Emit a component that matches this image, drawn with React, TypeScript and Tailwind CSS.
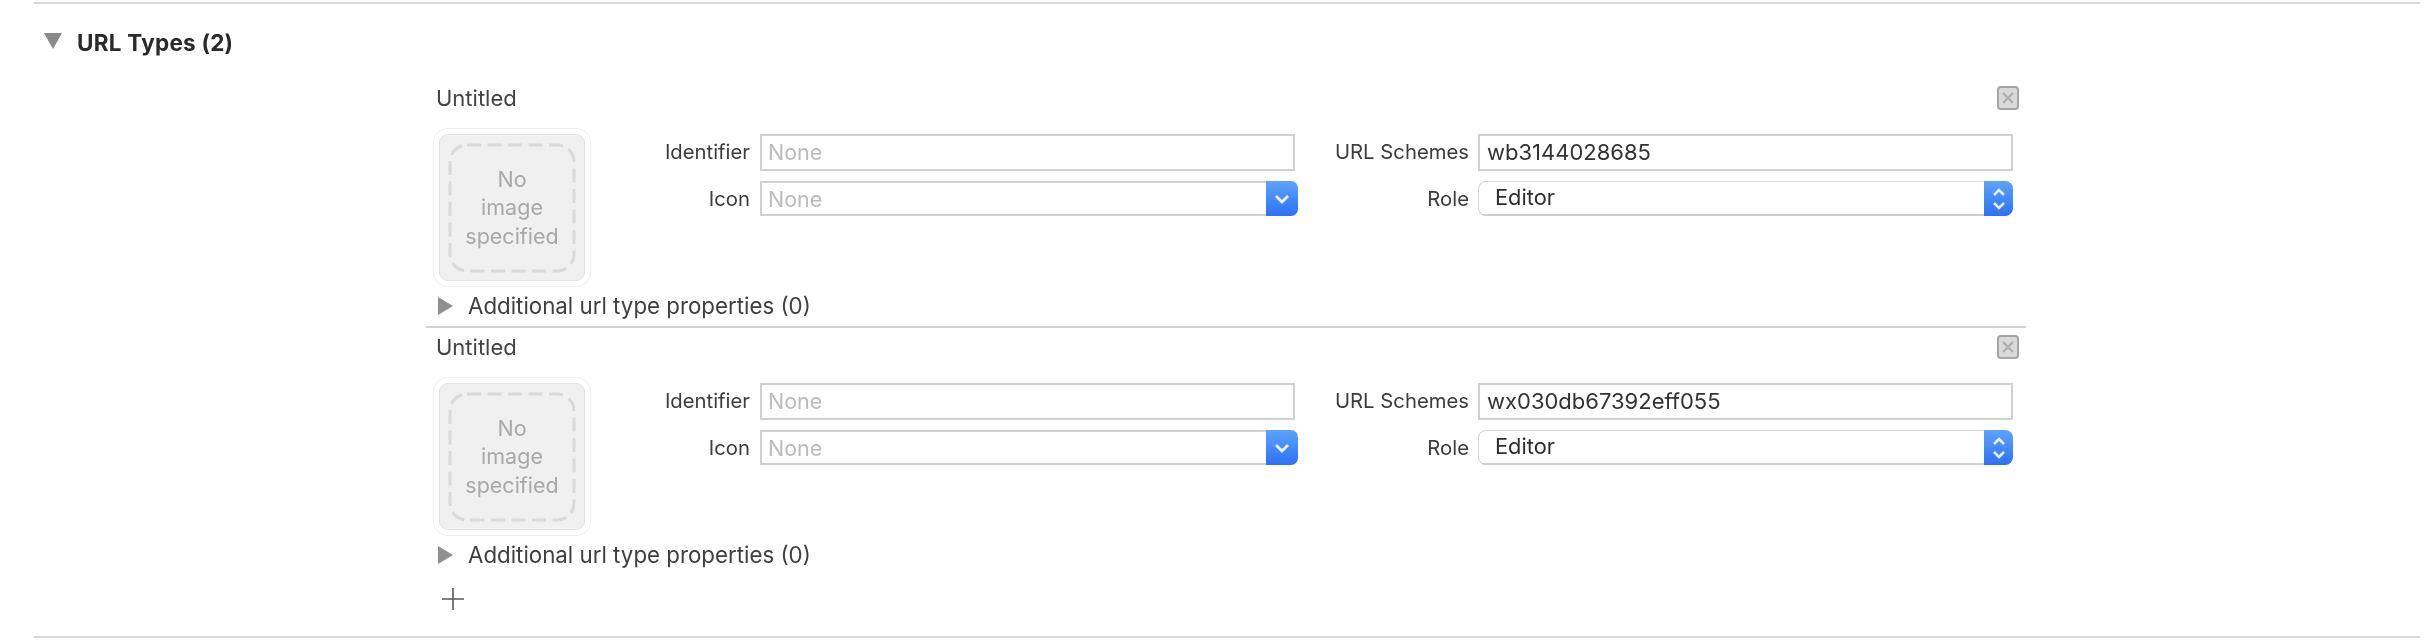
function Tri({ down }: { down?: boolean }) {
  return down ? (
    <svg width="18" height="16" viewBox="0 0 18 16" className="shrink-0">
      <path d="M0 0H18L9 16Z" fill="#8a8a8a" />
    </svg>
  ) : (
    <svg width="15" height="18" viewBox="0 0 15 18" className="shrink-0">
      <path d="M0 0L15 9L0 18Z" fill="#8f8f8f" />
    </svg>
  );
}

function Close() {
  return (
    <div className="w-[22px] h-[24px] rounded-[4px] border-2 border-[#a4a4a4] bg-[#dadada] flex items-center justify-center">
      <svg width="14" height="14" viewBox="0 0 14 14">
        <path d="M2 2L12 12M12 2L2 12" stroke="#b0b0b0" strokeWidth="2.4" />
      </svg>
    </div>
  );
}

function ImageBox() {
  return (
    <div className="w-[158px] h-[159px] shrink-0 rounded-[14px] border border-[#efefef] p-[5px]">
      <div className="relative w-full h-full rounded-[9px] bg-[#f0f0f0] border border-[#e2e2e2] flex items-center justify-center">
        <svg className="absolute inset-0" width="146" height="147" viewBox="0 0 146 147">
          <rect x="10" y="10" width="124" height="126" rx="17" fill="none" stroke="#d9d9d9" strokeWidth="3" strokeDasharray="14 6.5" />
        </svg>
        <div className="relative text-center text-[21.5px] leading-[28.5px] text-[#a9a9a9]">
          No
          <br />
          image
          <br />
          specified
        </div>
      </div>
    </div>
  );
}

function Label({ children }: { children: string }) {
  return <span className="text-[20.3px] text-[#3c3c3c] whitespace-nowrap">{children}</span>;
}

function Chevrons({ both }: { both?: boolean }) {
  return both ? (
    <svg width="16" height="26" viewBox="0 0 16 26">
      <path d="M3 9L8 4L13 9M3 17L8 22L13 17" fill="none" stroke="#e8f1ff" strokeWidth="2.5" />
    </svg>
  ) : (
    <svg width="16" height="10" viewBox="0 0 16 10">
      <path d="M2 2L8 8L14 2" fill="none" stroke="#eef5ff" strokeWidth="2.8" />
    </svg>
  );
}

function Item({ scheme }: { scheme: string }) {
  return (
    <div className="h-[247px] flex flex-col">
      <div className="h-[38px] flex items-center justify-between pl-[10px] pr-[7px] shrink-0">
        <span className="text-[22px] text-[#444444]">Untitled</span>
        <Close />
      </div>
      <div className="mt-[11px] pl-[7px] flex h-[159px] shrink-0">
        <ImageBox />
        <div className="pt-[6px] flex flex-col gap-[10px] w-[707px] shrink-0">
          <div className="h-[37px] flex items-center">
            <div className="w-[160px] pr-[1px] text-right shrink-0"><Label>Identifier</Label></div>
            <div className="ml-[9px] w-[535px] h-[37px] border-2 border-[#d0d0d0] flex items-center pl-[6px] text-[21.5px] text-[#bcbcbc]">None</div>
          </div>
          <div className="h-[35px] flex items-center">
            <div className="w-[160px] pr-[1px] pt-[2px] text-right shrink-0"><Label>Icon</Label></div>
            <div className="ml-[9px] w-[538px] h-[35px] flex rounded-r-[7px] overflow-hidden">
              <div className="flex-1 border-2 border-r-0 border-[#d0d0d0] flex items-center pl-[6px] pt-[2px] text-[21.5px] text-[#bcbcbc]">None</div>
              <div className="w-[32px] bg-gradient-to-b from-[#5ea3fb] to-[#2f70f6] flex items-center justify-center"><Chevrons /></div>
            </div>
          </div>
        </div>
        <div className="pt-[6px] flex flex-col gap-[10px] flex-1">
          <div className="h-[37px] flex items-center">
            <div className="w-[171px] text-right shrink-0"><Label>URL Schemes</Label></div>
            <div className="ml-[9px] w-[535px] h-[37px] border-2 border-[#d0d0d0] flex items-center pl-[7px] text-[22px] text-[#333333]">{scheme}</div>
          </div>
          <div className="h-[35px] flex items-center">
            <div className="w-[171px] pt-[1px] text-right shrink-0"><Label>Role</Label></div>
            <div className="ml-[9px] w-[535px] h-[35px] flex rounded-[8px] overflow-hidden shadow-[inset_0_0_0_1px_#d6d6d6]">
              <div className="flex-1 border-b-2 border-[#cfcfcf] flex items-center pl-[17px] text-[21.8px] text-[#2e2e2e]">Editor</div>
              <div className="w-[29px] bg-gradient-to-b from-[#5ea3fb] to-[#2f70f6] flex items-center justify-center"><Chevrons both /></div>
            </div>
          </div>
        </div>
      </div>
      <div className="h-[38px] flex items-center pl-[12px] gap-[15px] shrink-0">
        <Tri />
        <span className="text-[22.3px] text-[#3f3f3f] whitespace-nowrap">Additional url type properties (0)</span>
      </div>
    </div>
  );
}

export default function App() {
  return (
    <div className="w-[2426px] h-[642px] bg-white pt-[2px] overflow-hidden font-[Inter,sans-serif] blur-[0.6px]">
      <div className="ml-[34px] mr-[6px] h-[636px] border-t-2 border-b-2 border-[#d9d9d9] flex flex-col">
        <div className="h-[75px] shrink-0 flex items-start pt-[24px] pl-[10px] gap-[15px]">
          <div className="pt-[5px]"><Tri down /></div>
          <span className="text-[22.5px] leading-[30px] tracking-[0.25px] font-bold text-[#2a2a2a]">URL Types (2)</span>
        </div>
        <div className="ml-[392px] w-[1600px] flex flex-col">
          <Item scheme="wb3144028685" />
          <div className="h-[2px] bg-[#d2d2d2]" />
          <Item scheme="wx030db67392eff055" />
          <div className="pl-[16px] pt-[13px]">
            <svg width="22" height="22" viewBox="0 0 22 22">
              <path d="M11 0V22M0 11H22" stroke="#5a5a5a" strokeWidth="1.6" />
            </svg>
          </div>
        </div>
      </div>
    </div>
  );
}
